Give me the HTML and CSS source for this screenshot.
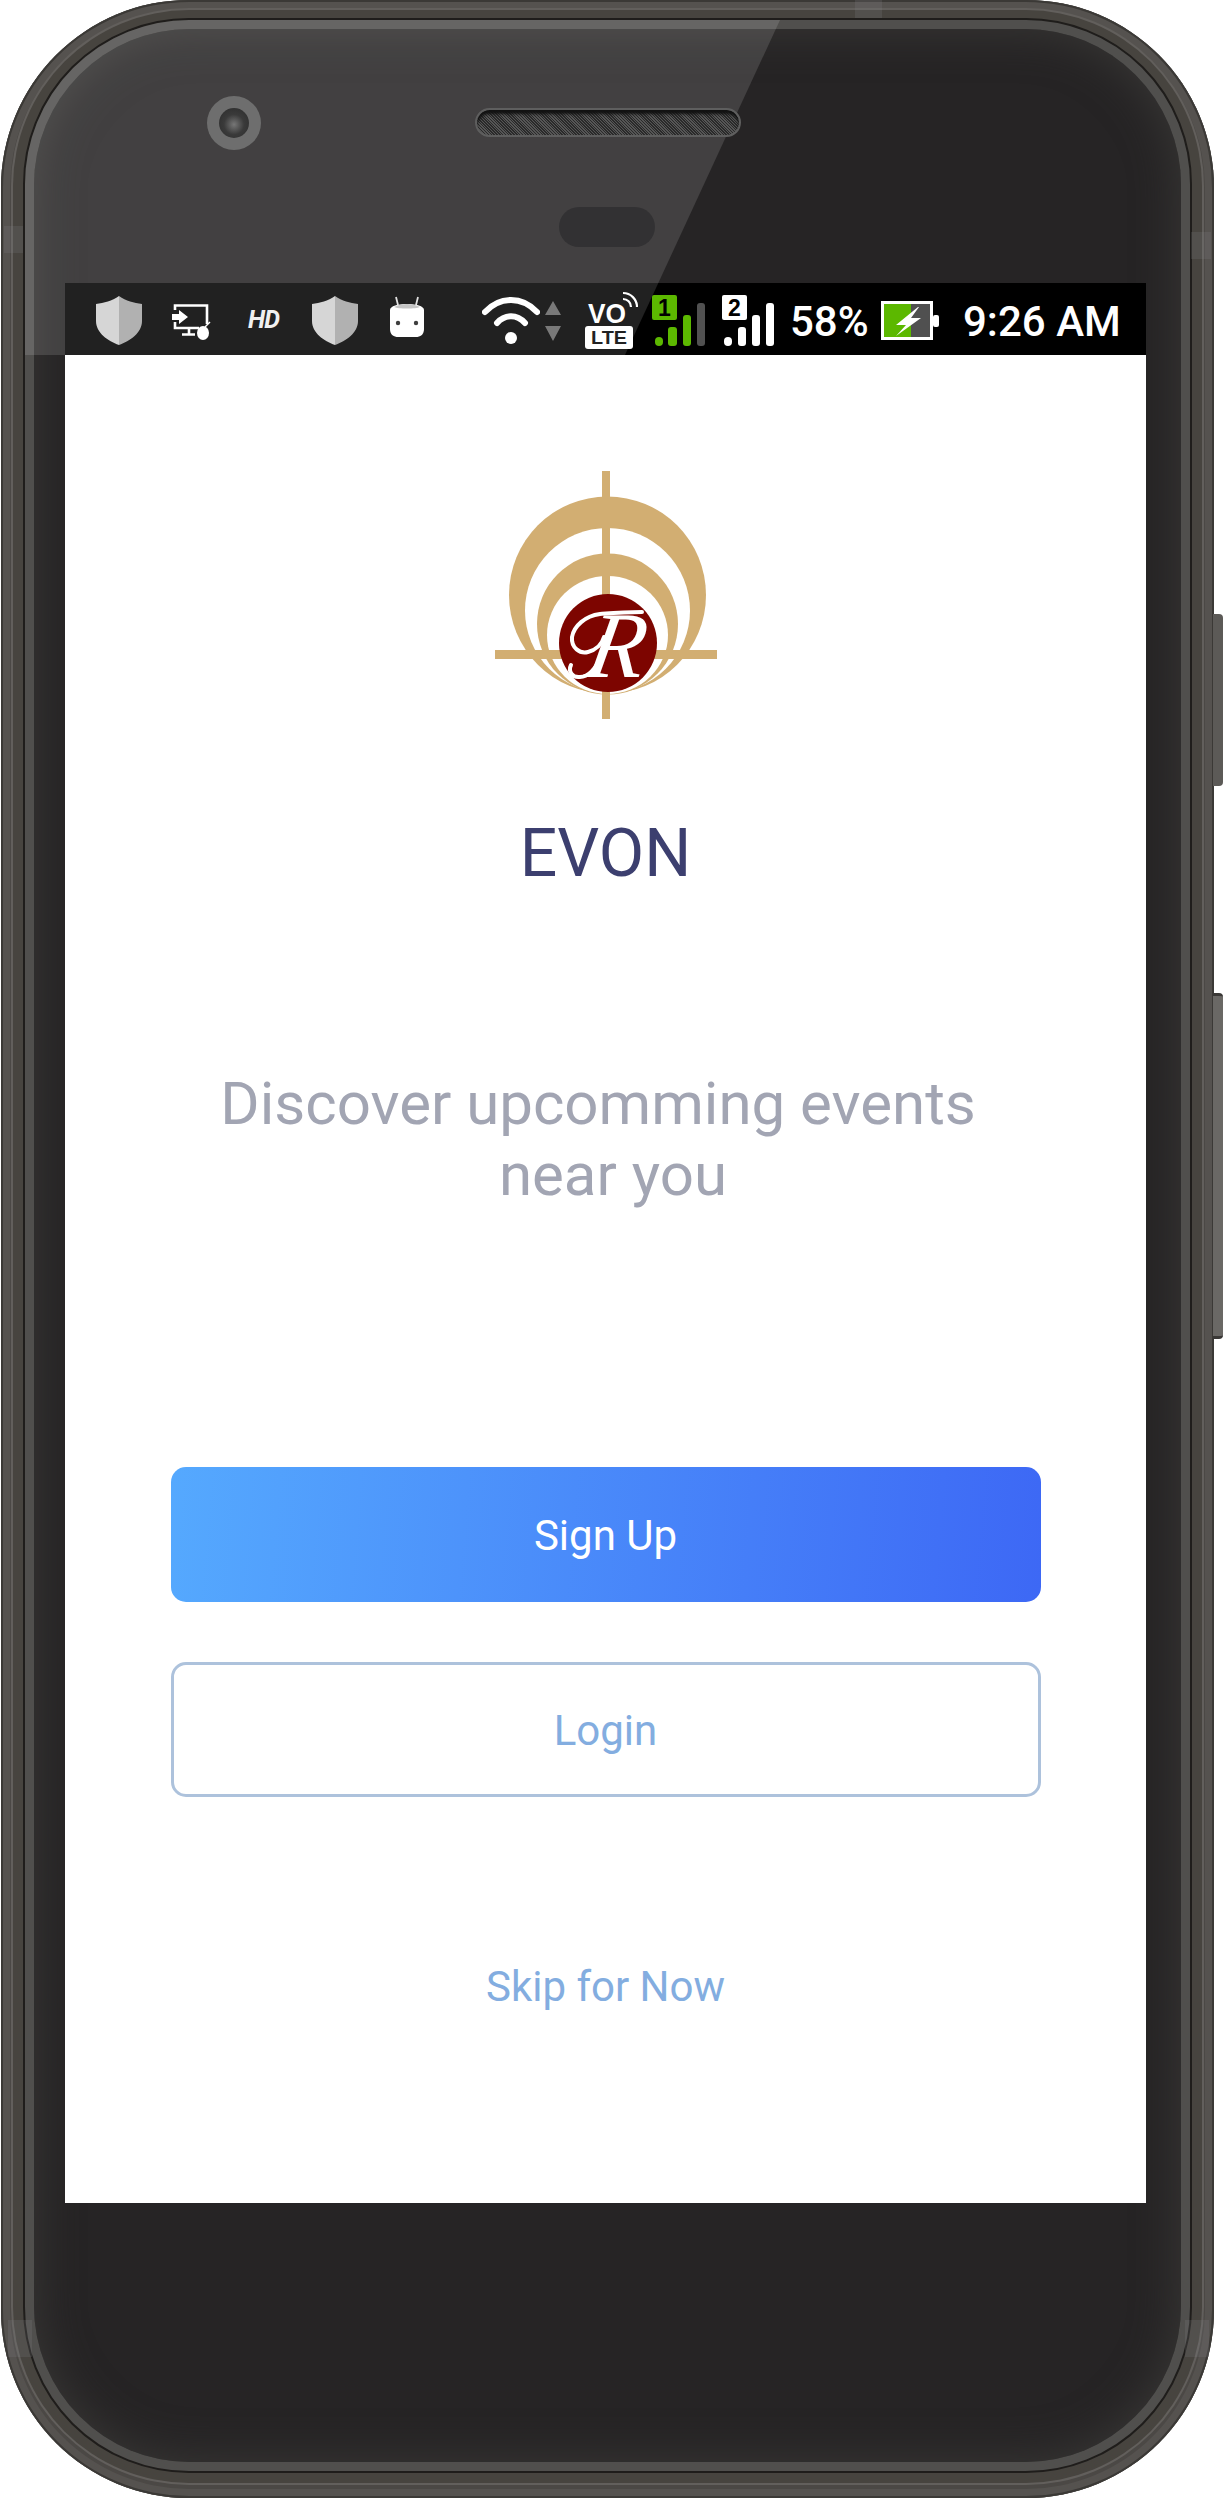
FILE: index.html
```html
<!DOCTYPE html>
<html lang="en">
<head>
    <meta charset="UTF-8">
    <meta name="viewport" content="width=device-width, initial-scale=1.0">
    <title>EVON</title>
    <link rel="stylesheet" href="styles.css">
</head>
<body>

    <div class="phone">
        <div class="side-button volume"></div>
        <div class="side-button power"></div>

        <div class="band">
            <div class="ring">
                <div class="glass">

                    <!-- status bar -->
                    <div class="status">
                        <svg class="icon shield-a" width="46" height="72" viewBox="0 0 46 72">
                            <path fill="#d0d0d0" d="M23 13C16 18 8 20 0 21V38C0 50 12 58 23 62Z"/>
                            <path fill="#a6a6a6" d="M23 13C30 18 38 20 46 21V38C46 50 34 58 23 62Z"/>
                        </svg>
                        <svg class="icon cast" width="39" height="72" viewBox="0 0 39 72">
                            <path fill="none" stroke="#fff" stroke-width="2.6" d="M3 27V22.5H35V41M3 39V45H27M17 45V51M10 51.5H23"/>
                            <path fill="#fff" d="M0 31H7V27L16 34L7 41V37H0Z"/>
                            <ellipse cx="31" cy="50" rx="6" ry="7" fill="#fff"/>
                            <path stroke="#fff" stroke-width="1.5" d="M33 44L38 39"/>
                        </svg>
                        <span class="hd">HD</span>
                        <svg class="icon shield-b" width="46" height="72" viewBox="0 0 46 72">
                            <path fill="#d0d0d0" d="M23 13C16 18 8 20 0 21V38C0 50 12 58 23 62Z"/>
                            <path fill="#a6a6a6" d="M23 13C30 18 38 20 46 21V38C46 50 34 58 23 62Z"/>
                        </svg>
                        <svg class="icon android" width="34" height="72" viewBox="0 0 34 72">
                            <path stroke="#ddd" stroke-width="1.8" d="M6 14L8 22M28 14L26 22"/>
                            <path fill="#fff" d="M0 27C0 23 8 21 17 21S34 23 34 27V46C34 52 30 54 26 54H8C4 54 0 52 0 46Z"/>
                            <path fill="#bdbdbd" d="M4 24C8 22 12 21 17 21S26 22 30 24C26 26 8 26 4 24Z"/>
                            <circle cx="8" cy="40" r="2.2" fill="#222"/>
                            <circle cx="26" cy="40" r="2.2" fill="#222"/>
                        </svg>
                        <svg class="icon wifi" width="58" height="72" viewBox="0 0 58 72">
                            <path fill="none" stroke="#fff" stroke-width="6" stroke-linecap="round" d="M3 29C18 13 40 13 55 29M15 40C23 31 35 31 43 40"/>
                            <circle cx="29" cy="55" r="6" fill="#fff"/>
                        </svg>
                        <svg class="icon arrows" width="16" height="72" viewBox="0 0 16 72">
                            <path fill="#666" d="M0 32L8 18L16 32ZM0 43H16L8 58Z"/>
                        </svg>
                        <svg class="icon volte" width="53" height="72" viewBox="0 0 53 72">
                            <text x="3" y="40" class="volte-vo" textLength="38" lengthAdjust="spacingAndGlyphs">VO</text>
                            <path fill="none" stroke="#fff" stroke-width="2.2" d="M38 16A8 8 0 0 1 46 24M38 10A14 14 0 0 1 52 24"/>
                            <rect x="0" y="43" width="48" height="23" rx="3" fill="#fff"/>
                            <text x="6" y="61" class="volte-lte" textLength="36" lengthAdjust="spacingAndGlyphs">LTE</text>
                        </svg>
                        <svg class="icon sim-one" width="53" height="72" viewBox="0 0 53 72">
                            <rect x="0" y="12" width="25" height="25" rx="2" fill="#5cb800"/>
                            <text x="12.5" y="33" class="sim-num">1</text>
                            <rect x="3" y="54" width="8" height="9" rx="4" fill="#5cb800"/>
                            <rect x="16" y="44" width="9" height="19" rx="3" fill="#5cb800"/>
                            <rect x="31" y="32" width="8" height="31" rx="3" fill="#5cb800"/>
                            <rect x="45" y="20" width="8" height="43" rx="3" fill="#515151"/>
                        </svg>
                        <svg class="icon sim-two" width="52" height="72" viewBox="0 0 52 72">
                            <rect x="0" y="12" width="25" height="25" rx="2" fill="#fff"/>
                            <text x="12.5" y="33" class="sim-num">2</text>
                            <rect x="2" y="54" width="8" height="9" rx="4" fill="#fff"/>
                            <rect x="16" y="44" width="8" height="19" rx="3" fill="#fff"/>
                            <rect x="30" y="32" width="8" height="31" rx="3" fill="#fff"/>
                            <rect x="44" y="20" width="8" height="43" rx="3" fill="#fff"/>
                        </svg>
                        <span class="status-text percent">58%</span>
                        <svg class="icon battery" width="58" height="72" viewBox="0 0 58 72">
                            <rect x="1.5" y="19.5" width="49" height="36" fill="#505050" stroke="#fff" stroke-width="3"/>
                            <rect x="3" y="21" width="27" height="33" fill="#5cb800"/>
                            <rect x="52" y="32" width="6" height="12" rx="2" fill="#fff"/>
                            <path fill="#fff" d="M37 24L15 42H25L15 53L40 35H30L38 24Z"/>
                        </svg>
                        <span class="status-text time">9:26 AM</span>
                    </div>

                    <!-- app screen -->
                    <div class="screen">
                        <svg class="logo" width="222" height="248" viewBox="495 471 222 248">
                            <circle cx="607.5" cy="595" r="98.5" fill="#d2ae72"/>
                            <circle cx="607.5" cy="610.5" r="82.5" fill="#fff"/>
                            <circle cx="607.5" cy="624" r="70.5" fill="#d2ae72"/>
                            <ellipse cx="607.5" cy="635" rx="60.5" ry="59" fill="#fff"/>
                            <rect x="602" y="471" width="8" height="248" fill="#d2ae72"/>
                            <rect x="495" y="650" width="222" height="9" fill="#d2ae72"/>
                            <circle cx="608" cy="643" r="49" fill="#7d0500"/>
                            <path fill="none" stroke="#fff" stroke-width="4" stroke-linecap="round" d="M642 612C625 612 613 613 600 614C585 616 574 626 572 637C571 648 580 654 588 652C596 650 602 644 604 637M602 655C596 668 588 677 580 677C572 678 568 671 571 665"/>
                            <text x="0" y="0" class="logo-letter" transform="translate(612 677) skewX(-10)">R</text>
                        </svg>

                        <h1 class="title">EVON</h1>
                        <p class="tagline">Discover upcomming events&nbsp;<br>&nbsp;near you</p>

                        <button class="btn btn-primary">Sign Up</button>
                        <button class="btn btn-outline">Login</button>
                        <a class="skip" href="#">Skip for Now</a>
                    </div>

                </div>
                <div class="glare"></div>
            </div>
        </div>

        <!-- front sensors -->
        <div class="camera"><div class="lens"></div></div>
        <div class="speaker"></div>
        <div class="sensor"></div>

        <!-- antenna lines -->
        <div class="antenna antenna-top"></div>
        <div class="antenna antenna-left"></div>
        <div class="antenna antenna-right"></div>
        <div class="antenna antenna-bl"></div>
        <div class="antenna antenna-br"></div>
    </div>

</body>
</html>
```

FILE: styles.css
```css
* {
    box-sizing: border-box;
}
body {
    margin: 0;
    background: #fff;
    font-family: Roboto, "Liberation Sans", sans-serif;
}

/* phone shell */
.phone {
    position: relative;
    width: 1213px;
    height: 2498px;
    margin-left: 1px;
    padding: 10px 12px 15px 12px;
    border-radius: 188px;
    background: #4b4845;
    box-shadow: inset 0 0 0 2px #3b3936, inset 0 0 0 9px #55524f;
}
.band {
    height: 100%;
    padding: 8px 10px 10px 10px;
    border-radius: 176px;
    background: #47443f;
    box-shadow: 0 0 0 2px #625f5c;
}
.ring {
    position: relative;
    height: 100%;
    padding: 9px;
    overflow: hidden;
    border-radius: 166px;
    background: #504f4d;
    border: 2px solid #1f1d1b;
}
.glass {
    height: 100%;
    padding: 254px 35px 0 31px;
    border-radius: 156px;
    background: #262425;
    box-shadow: inset 0 0 45px #3a3937;
}
.glare {
    position: absolute;
    top: 0;
    left: 0;
    width: 760px;
    height: 337px;
    background: rgba(255, 255, 255, 0.13);
    clip-path: polygon(0 0, 755px 0, 600px 335px, 0 335px);
}
.side-button {
    position: absolute;
    right: -9px;
    width: 10px;
    background: #5c5a57;
    border-radius: 0 4px 4px 0;
}
.volume {
    top: 614px;
    height: 172px;
}
.power {
    top: 993px;
    height: 346px;
    background: #6a6865;
    border-top: 3px solid #3a3836;
    border-bottom: 3px solid #3a3836;
}
.camera {
    position: absolute;
    top: 96px;
    left: 206px;
    width: 54px;
    height: 54px;
    padding: 12px;
    border-radius: 50%;
    background: #6e6e6e;
}
.lens {
    width: 30px;
    height: 30px;
    border-radius: 50%;
    background: radial-gradient(circle at 50% 55%, #777 0, #3a3a3a 45%, #2a2a2a 100%);
}
.speaker {
    position: absolute;
    top: 108px;
    left: 474px;
    width: 266px;
    height: 29px;
    border-radius: 15px;
    border: 2px solid #5e5e5e;
    background: repeating-linear-gradient(45deg, #2a2a2a 0, #2a2a2a 1px, #565656 1px, #565656 2px);
    box-shadow: inset 0 4px 3px #111;
}
.sensor {
    position: absolute;
    top: 207px;
    left: 558px;
    width: 96px;
    height: 40px;
    border-radius: 20px;
    background: #323133;
}
.antenna {
    position: absolute;
    background: rgba(130, 130, 135, 0.2);
}
.antenna-top {
    top: 0;
    left: 854px;
    width: 27px;
    height: 18px;
}
.antenna-left {
    top: 226px;
    left: 3px;
    width: 19px;
    height: 27px;
}
.antenna-right {
    top: 232px;
    left: 1190px;
    width: 20px;
    height: 27px;
}
.antenna-bl {
    top: 2320px;
    left: 7px;
    width: 24px;
    height: 37px;
}
.antenna-br {
    top: 2320px;
    left: 1184px;
    width: 24px;
    height: 37px;
}

/* status bar */
.status {
    display: flex;
    align-items: center;
    height: 72px;
    background: #000;
    color: #fff;
}
.icon {
    display: block;
    flex: none;
}
.shield-a {
    margin-left: 31px;
}
.cast {
    margin-left: 30px;
}
.hd {
    margin-left: 37px;
    width: 31px;
    font-size: 25px;
    font-weight: 700;
    font-style: italic;
    letter-spacing: -1px;
    color: #eee;
}
.shield-b {
    margin-left: 33px;
}
.android {
    margin-left: 32px;
}
.wifi {
    margin-left: 58px;
}
.arrows {
    margin-left: 5px;
}
.volte {
    margin-left: 24px;
}
.sim-one {
    margin-left: 14px;
}
.sim-two {
    margin-left: 17px;
}
.status-text {
    padding-top: 5px;
    font-size: 42px;
    font-weight: 500;
    line-height: 72px;
    white-space: nowrap;
}
.percent {
    margin-left: 16px;
    width: 78px;
}
.battery {
    margin-left: 13px;
}
.time {
    margin-left: 24px;
}
.volte-vo {
    font: 700 28px "Liberation Sans", sans-serif;
    fill: #fff;
}
.volte-lte {
    font: 700 19px "Liberation Sans", sans-serif;
    fill: #000;
}
.sim-num {
    font: 700 23px "Liberation Sans", sans-serif;
    fill: #000;
    text-anchor: middle;
}

/* app screen */
.screen {
    display: flex;
    flex-direction: column;
    align-items: center;
    height: 1848px;
    background: #fff;
}
.logo {
    display: block;
    margin-top: 116px;
}
.logo-letter {
    font: italic 400 94px "Liberation Serif", serif;
    fill: #fff;
    text-anchor: middle;
}
.title {
    margin: 95px 0 0;
    font-size: 66px;
    font-weight: 400;
    line-height: 80px;
    color: #3c3f6f;
}
.tagline {
    margin: 174px 0 0;
    font-size: 60px;
    line-height: 71px;
    text-align: center;
    color: #a2a5b3;
}
.btn {
    display: block;
    width: 870px;
    height: 135px;
    padding-top: 3px;
    font-family: inherit;
    font-size: 42px;
    border-radius: 15px;
}
.btn-primary {
    margin-top: 257px;
    border: none;
    color: #fff;
    background: linear-gradient(95deg, #55a9fe 0, #3d68f5 100%);
}
.btn-outline {
    margin-top: 60px;
    border: 3px solid #adc2dc;
    color: #83ade0;
    background: #fff;
}
.skip {
    margin-top: 165px;
    font-size: 42px;
    line-height: 50px;
    color: #83ade0;
    text-decoration: none;
}
```
